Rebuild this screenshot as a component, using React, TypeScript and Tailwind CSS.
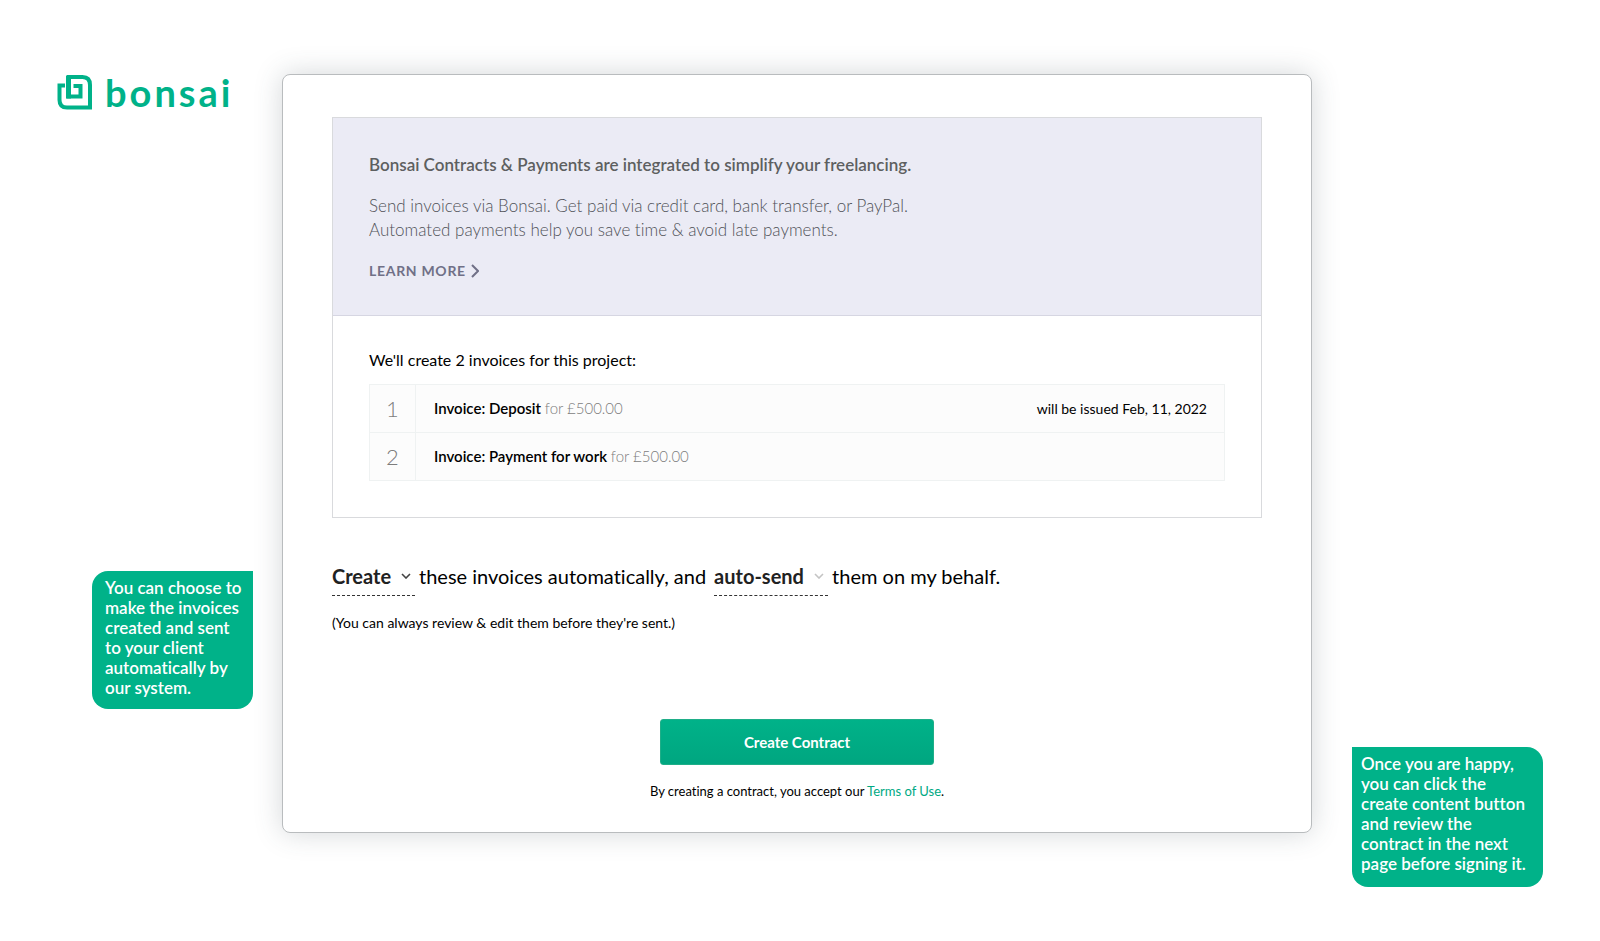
import { ReactNode } from "react";

const invoices = [
  { name: "Invoice: Deposit", amount: "for £500.00", note: "will be issued Feb, 11, 2022" },
  { name: "Invoice: Payment for work", amount: "for £500.00", note: "" },
];

function Logo() {
  return (
    <a href="#" aria-label="bonsai" className="flex h-9 items-center gap-3 text-[#00b289]">
      <svg width="36" height="36" viewBox="0 0 36 36" fill="none" stroke="currentColor" strokeWidth="4" aria-hidden="true">
        <path d="M8 11.500H2.500V26Q2.500 33.500 10 33.500H33V11Q33 3 25.500 3H11.500V22.500H23.500V12H16.500" />
        <path d="M11.500 2V24.500" strokeWidth="5" />
      </svg>
      <span className="text-[38px] leading-9 font-bold tracking-[3px]">bonsai</span>
    </a>
  );
}

function Chevron({ className }: { className: string }) {
  return (
    <svg viewBox="0 0 10 6" fill="none" stroke="currentColor" strokeWidth="1.6" aria-hidden="true" className={className}>
      <path d="M1 1L5 5L9 1" />
    </svg>
  );
}

function InlineSelect({ label, options, width, tone }: { label: string; options: string[]; width: string; tone: string }) {
  return (
    <span className={`relative inline-flex items-center border-b border-dashed border-[#333] ${width}`}>
      <select
        aria-label={label}
        className="h-[38px] w-full cursor-pointer appearance-none bg-transparent text-xl font-bold text-[#1f2222] outline-none"
      >
        {options.map((o) => (
          <option key={o}>{o}</option>
        ))}
      </select>
      <Chevron className={`pointer-events-none absolute right-1 h-[6px] w-[10px] ${tone}`} />
    </span>
  );
}

function Callout({ className, children }: { className: string; children: ReactNode }) {
  return (
    <aside className={`bg-[#00b289] pt-[7px] text-[17px] leading-5 font-semibold text-white ${className}`}>
      {children}
    </aside>
  );
}

export default function App() {
  return (
    <div className="flex min-h-screen items-start bg-white pt-[74px] font-[Lato,sans-serif] text-black [font-variant-ligatures:none]">
      <div className="flex w-[282px] shrink-0 flex-col pl-[57px]">
        <Logo />
        <Callout className="mt-[461px] ml-[35px] w-[161px] rounded-2xl rounded-tr-none pr-1 pb-[11px] pl-[13px]">
          You can choose to make the invoices created and sent to your client automatically by our system.
        </Callout>
      </div>

      <main className="min-w-0 flex-1 rounded-lg border border-[#b9bcbe] bg-white px-[49px] pt-[42px] pb-[31px] shadow-[0_0_28px_rgba(60,75,80,0.22)]">
        <section className="border border-[#d9dadd]">
          <div className="border-b border-[#d6d6e2] bg-[#ebebf5] px-9 pt-[35px] pb-8 text-[17px] text-[#6f6f76]">
            <h1 className="leading-6 font-semibold text-[#5d5f60]">
              Bonsai Contracts &amp; Payments are integrated to simplify your freelancing.
            </h1>
            <p className="mt-[17px] leading-6 font-light text-[#505258]">
              Send invoices via Bonsai. Get paid via credit card, bank transfer, or PayPal.
              <br />
              Automated payments help you save time &amp; avoid late payments.
            </p>
            <a href="#" className="mt-[17px] inline-flex items-center gap-[5px] text-sm leading-6 font-bold tracking-wider text-[#707087]">
              LEARN MORE
              <svg width="8" height="14" viewBox="0 0 8 14" fill="none" stroke="currentColor" strokeWidth="2" aria-hidden="true">
                <path d="M1 1L7 7L1 13" />
              </svg>
            </a>
          </div>
          <div className="px-9 pt-8 pb-9">
            <h2 className="text-base leading-6">We'll create 2 invoices for this project:</h2>
            <table className="mt-3 w-full border-collapse bg-[#fcfcfc] text-[15px]">
              <tbody>
                {invoices.map((inv, i) => (
                  <tr key={inv.name} className="h-12 border border-[#eff2f2]">
                    <td className="w-[46px] border-r border-[#eff2f2] text-center text-[22px] font-light text-[#7d7d7d]">{i + 1}</td>
                    <td className="pl-[18px]">
                      <span className="font-semibold">{inv.name}</span> <span className="font-light text-[#7d7d7d]">{inv.amount}</span>
                    </td>
                    <td className="pr-[17px] text-right text-sm">{inv.note}</td>
                  </tr>
                ))}
              </tbody>
            </table>
          </div>
        </section>

        <form onSubmit={(e) => e.preventDefault()}>
          <div className="mt-[39px] flex flex-wrap items-start text-xl leading-[38px]">
            <InlineSelect label="Invoice creation" options={["Create", "Don't create"]} width="w-[83px]" tone="text-[#444]" />
            <span className="mr-2 ml-1">these invoices automatically, and</span>
            <InlineSelect label="Invoice sending" options={["auto-send", "don't send"]} width="w-[114px]" tone="text-[#c4c4c4]" />
            <span className="ml-1">them on my behalf.</span>
          </div>
          <p className="mt-[17px] text-sm leading-5">(You can always review &amp; edit them before they're sent.)</p>
          <div className="mt-[86px] flex flex-col items-center">
            <button
              type="submit"
              className="h-[46px] w-[274px] rounded-[3px] border border-[#1fae88] bg-linear-to-b from-[#00b289] to-[#00a680] text-[15px] font-bold text-white"
            >
              Create Contract
            </button>
            <p className="mt-4 text-[13px] leading-5">
              By creating a contract, you accept our <a href="#" className="text-[#00a983]">Terms of Use</a>.
            </p>
          </div>
        </form>
      </main>

      <div className="w-[288px] shrink-0 pt-[673px] pl-10">
        <Callout className="w-[191px] rounded-2xl rounded-tl-none pr-2 pb-[13px] pl-[9px]">
          Once you are happy, you can click the create content button and review the contract in the next page before signing it.
        </Callout>
      </div>
    </div>
  );
}
